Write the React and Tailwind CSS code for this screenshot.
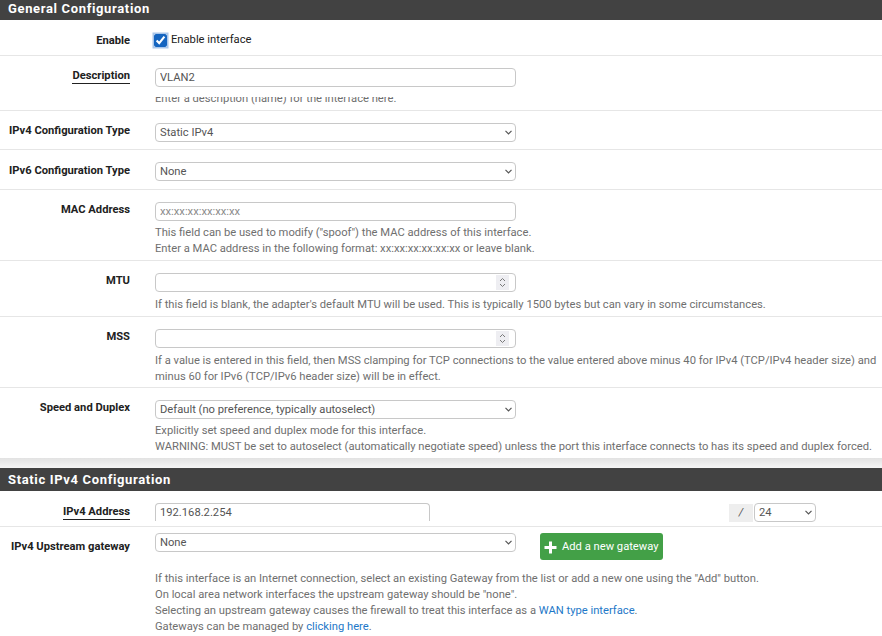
import React from "react";

const box = "block h-[19px] rounded-[4px] border border-[#c8c8c8] bg-white px-[4px] text-[11.2px] leading-[15px] text-[#555555] outline-none";

function Row({ label, underline, height, labelTop, children, last }) {
  return (
    <div className={`flex shrink-0 ${last ? "" : "border-b border-[#e6e6e6]"} ${height}`}>
      <div className={`w-[130px] shrink-0 text-right font-bold text-[#212121] ${labelTop}`}>
        <span className={underline ? "border-b border-[#212121] pb-[1px]" : ""}>{label}</span>
      </div>
      <div className="ml-[25px] min-w-0 flex-1 pt-[12px]">{children}</div>
    </div>
  );
}

function Help({ children, className = "" }) {
  return <div className={`text-[#6f6f6f] leading-[16px] ${className}`}>{children}</div>;
}

function Select({ value, width = "w-[361px]" }) {
  return (
    <div className={`relative shrink-0 ${width}`}>
      <select className={`${box} w-full appearance-none`} defaultValue={value}>
        <option>{value}</option>
      </select>
      <svg className="pointer-events-none absolute right-[4px] top-[7px]" width="7" height="5" viewBox="0 0 7 5" fill="none" stroke="#555555" strokeWidth="1.2">
        <path d="M0.5 0.8 L3.5 3.8 L6.5 0.8" />
      </svg>
    </div>
  );
}

function NumberInput() {
  return (
    <div className="relative w-[361px]">
      <input type="number" className={`${box} w-full [appearance:textfield] [&::-webkit-inner-spin-button]:appearance-none`} />
      <div className="pointer-events-none absolute right-[7px] top-[2px] flex h-[15px] w-[13px] items-center justify-center bg-[#eeeef2]">
        <svg width="7" height="11" viewBox="0 0 7 11" fill="none" stroke="#7a7a7a" strokeWidth="1">
          <path d="M1 4 L3.5 1.5 L6 4" />
          <path d="M1 7 L3.5 9.5 L6 7" />
        </svg>
      </div>
    </div>
  );
}

export default function App() {
  return (
    <div className="h-[636px] w-[882px] overflow-hidden bg-white font-['Roboto',sans-serif] text-[11.2px] text-[#212121]">
      <div className="h-[20px] bg-[#424242] px-2 text-[13px] font-bold leading-[17px] tracking-[0.65px] text-white">
        General Configuration
      </div>

      <Row label="Enable" height="h-[36px]" labelTop="pt-[13px]">
        <div className="flex h-[17px] items-center">
          <input type="checkbox" defaultChecked className="m-0 -ml-[1px] h-[13px] w-[13px] accent-[#1565c0] shadow-[0_0_0_1.5px_#a9c6ea]" />
          <span className="ml-[4px]">Enable interface</span>
        </div>
      </Row>

      <Row label="Description" underline height="h-[55px]" labelTop="pt-[12px]">
        <input className={`${box} w-[361px]`} defaultValue="VLAN2" />
        <div className="mt-[10px] h-[10px] overflow-hidden text-[#6f6f6f]">
          <div className="-mt-[6px] leading-[16px]">Enter a description (name) for the interface here.</div>
        </div>
      </Row>

      <Row label="IPv4 Configuration Type" height="h-[39px]" labelTop="pt-[12px]">
        <Select value="Static IPv4" />
      </Row>

      <Row label="IPv6 Configuration Type" height="h-[40px]" labelTop="pt-[13px]">
        <Select value="None" />
      </Row>

      <Row label="MAC Address" height="h-[71px]" labelTop="pt-[12px]">
        <input className={`${box} w-[361px] placeholder:text-[#8a8a8a]`} placeholder="xx:xx:xx:xx:xx:xx" />
        <Help className="mt-[4px]">
          This field can be used to modify ("spoof") the MAC address of this interface.
          <br />
          Enter a MAC address in the following format: xx:xx:xx:xx:xx:xx or leave blank.
        </Help>
      </Row>

      <Row label="MTU" height="h-[56px]" labelTop="pt-[12px]">
        <NumberInput />
        <Help className="mt-[5px]">
          If this field is blank, the adapter's default MTU will be used. This is typically 1500 bytes but can vary in some circumstances.
        </Help>
      </Row>

      <Row label="MSS" height="h-[71px]" labelTop="pt-[12px]">
        <NumberInput />
        <Help className="mt-[5px]">
          If a value is entered in this field, then MSS clamping for TCP connections to the value entered above minus 40 for IPv4 (TCP/IPv4 header size) and
          <br />
          minus 60 for IPv6 (TCP/IPv6 header size) will be in effect.
        </Help>
      </Row>

      <Row label="Speed and Duplex" height="h-[70px]" labelTop="pt-[12px]" last>
        <Select value="Default (no preference, typically autoselect)" />
        <Help className="mt-[4px]">
          Explicitly set speed and duplex mode for this interface.
          <br />
          WARNING: MUST be set to autoselect (automatically negotiate speed) unless the port this interface connects to has its speed and duplex forced.
        </Help>
      </Row>

      <div className="h-[10px] bg-gradient-to-b from-[#e2e2e2] to-[#f6f6f6]" />
      <div className="h-[23px] bg-[#424242] px-2 text-[13px] font-bold leading-[23px] tracking-[0.65px] text-white">
        Static IPv4 Configuration
      </div>

      <div className="flex h-[36px] border-b border-[#e6e6e6]">
        <div className="w-[130px] shrink-0 pt-[13px] text-right font-bold">
          <span className="border-b border-[#212121] pb-[1px]">IPv4 Address</span>
        </div>
        <div className="ml-[25px] flex flex-1 items-start pt-[12px]">
          <input
            className="h-[18px] w-[275px] rounded-t-[4px] border border-b-0 border-[#c8c8c8] bg-white px-[4px] text-[11.2px] leading-[15px] text-[#555555] outline-none"
            defaultValue="192.168.2.254"
          />
          <div className="ml-[299px] mt-[1px] flex h-[18px] w-[24px] items-center justify-center bg-[#eeeeee] italic text-[#555555]">/</div>
          <div className="ml-[1px]">
            <Select value="24" width="w-[62px]" />
          </div>
        </div>
      </div>

      <div className="flex">
        <div className="w-[130px] shrink-0 pt-[12px] text-right font-bold">IPv4 Upstream gateway</div>
        <div className="ml-[25px] flex-1 pt-[6px]">
          <div className="flex items-start">
            <Select value="None" />
            <button className="ml-6 flex h-[27px] w-[123px] items-center rounded-[3px] bg-[#43a047] pl-[4px] pt-[1px] text-[11.2px] text-white">
              <svg width="13" height="13" viewBox="0 0 13 13" fill="#ffffff">
                <path d="M5 0.5 H8 V5 H12.5 V8 H8 V12.5 H5 V8 H0.5 V5 H5 Z" />
              </svg>
              <span className="ml-[5px]">Add a new gateway</span>
            </button>
          </div>
          <Help className="mt-[11px]">
            If this interface is an Internet connection, select an existing Gateway from the list or add a new one using the "Add" button.
            <br />
            On local area network interfaces the upstream gateway should be "none".
            <br />
            Selecting an upstream gateway causes the firewall to treat this interface as a <a className="text-[#1e78c8]">WAN type interface</a>.
            <br />
            Gateways can be managed by <a className="text-[#1e78c8]">clicking here</a>.
          </Help>
        </div>
      </div>
    </div>
  );
}
